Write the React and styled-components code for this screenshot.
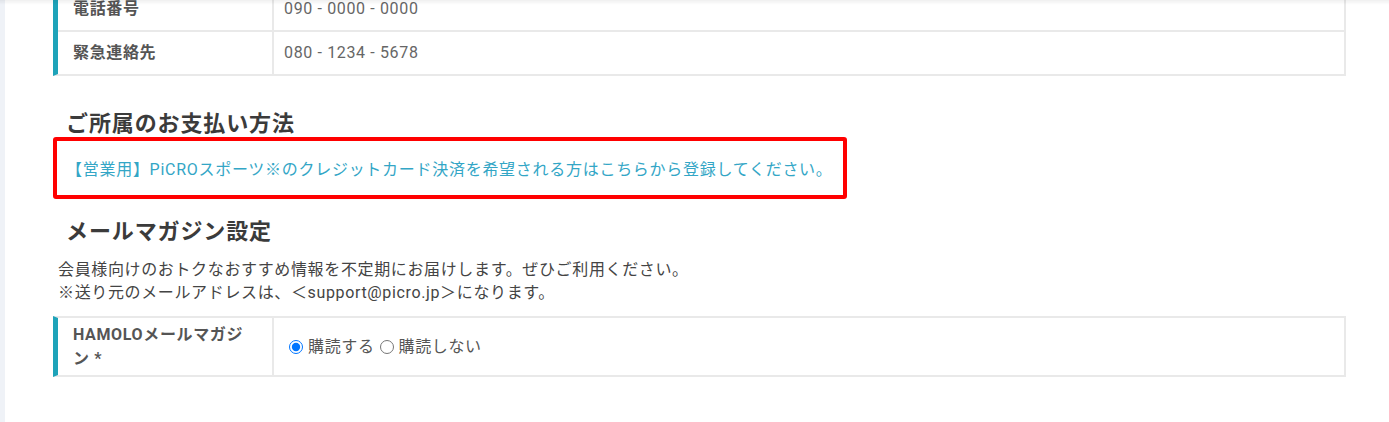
import * as React from 'react';
import styled, { createGlobalStyle } from 'styled-components';

const GlobalStyle = createGlobalStyle`
  html, body {
    margin: 0;
    padding: 0;
    background: #fff;
  }
  body {
    font-family: Roboto, "Noto Sans CJK JP", sans-serif;
    color: #444;
    overflow: hidden;
  }
`;

const Page = styled.div`
  display: flex;
  min-height: 422px;
`;

const SideRail = styled.div`
  width: 5px;
  flex: 0 0 5px;
  background: #eff2f7;
`;

const Main = styled.main`
  flex: 1;
  padding: 0 43px 40px 48px;
  margin-top: -14px;
`;

const TopShade = styled.div`
  position: fixed;
  top: 0;
  left: 0;
  right: 0;
  height: 5px;
  background: linear-gradient(rgba(0, 0, 0, 0.06), rgba(0, 0, 0, 0));
  pointer-events: none;
`;

const InfoTable = styled.div`
  border: 2px solid #e9e9e9;
  border-left: 5px solid #1ea3b9;
`;

const Row = styled.div`
  display: flex;
  min-height: ${p => p.h || 42}px;
  & + & {
    border-top: 2px solid #e9e9e9;
  }
`;

const Label = styled.div`
  width: 184px;
  flex: 0 0 184px;
  padding: 4px 15px;
  display: flex;
  align-items: center;
  font-size: 16px;
  font-weight: 700;
  line-height: 24px;
  letter-spacing: 0.04em;
  color: #555;
  border-right: 2px solid #e9e9e9;
`;

const Value = styled.div`
  flex: 1;
  padding: 4px 10px;
  display: flex;
  align-items: center;
  font-size: 16px;
  line-height: 24px;
  letter-spacing: 0.04em;
  color: #666;
`;

const Heading = styled.h2`
  margin: ${p => p.mt}px 0 0 13px;
  font-size: 22px;
  line-height: 26px;
  font-weight: 700;
  letter-spacing: 0.04em;
  color: #3b3b3b;
`;

const NoticeBox = styled.div`
  display: inline-flex;
  align-items: center;
  box-sizing: border-box;
  height: 62px;
  margin-top: 0;
  padding: 0 10px 0 9px;
  border: 4px solid #ff0000;
  border-radius: 3px;
`;

const NoticeLink = styled.a`
  font-size: 16px;
  letter-spacing: 0.045em;
  color: #33a6c6;
  text-decoration: none;
`;

const Lead = styled.p`
  margin: 13px 0 0 5px;
  font-size: 16px;
  line-height: 23px;
  letter-spacing: 0.04em;
  color: #444;
`;

const RadioLabel = styled.label`
  display: inline-flex;
  align-items: center;
  color: #555;

  input {
    margin: 0 5px 0 5px;
    width: 14px;
    height: 14px;
  }
`;

const Spacer = styled.div`
  height: ${p => p.h}px;
`;

export default function App() {
  return (
    <>
      <GlobalStyle />
      <Page>
        <SideRail />
        <Main>
          <InfoTable>
            <Row>
              <Label>電話番号</Label>
              <Value>090 - 0000 - 0000</Value>
            </Row>
            <Row>
              <Label>緊急連絡先</Label>
              <Value>080 - 1234 - 5678</Value>
            </Row>
          </InfoTable>

          <Heading mt={35}>ご所属のお支払い方法</Heading>
          <NoticeBox>
            <NoticeLink href="#">
              【営業用】PiCROスポーツ※のクレジットカード決済を希望される方はこちらから登録してください。
            </NoticeLink>
          </NoticeBox>

          <Heading mt={20}>メールマガジン設定</Heading>
          <Lead>
            会員様向けのおトクなおすすめ情報を不定期にお届けします。ぜひご利用ください。
            <br />
            ※送り元のメールアドレスは、＜support@picro.jp＞になります。
          </Lead>
          <Spacer h={12} />
          <InfoTable>
            <Row h={57}>
              <Label>HAMOLOメールマガジン *</Label>
              <Value>
                <RadioLabel>
                  <input type="radio" name="magazine" defaultChecked />
                  購読する
                </RadioLabel>
                <RadioLabel>
                  <input type="radio" name="magazine" />
                  購読しない
                </RadioLabel>
              </Value>
            </Row>
          </InfoTable>
        </Main>
      </Page>
      <TopShade />
    </>
  );
}
